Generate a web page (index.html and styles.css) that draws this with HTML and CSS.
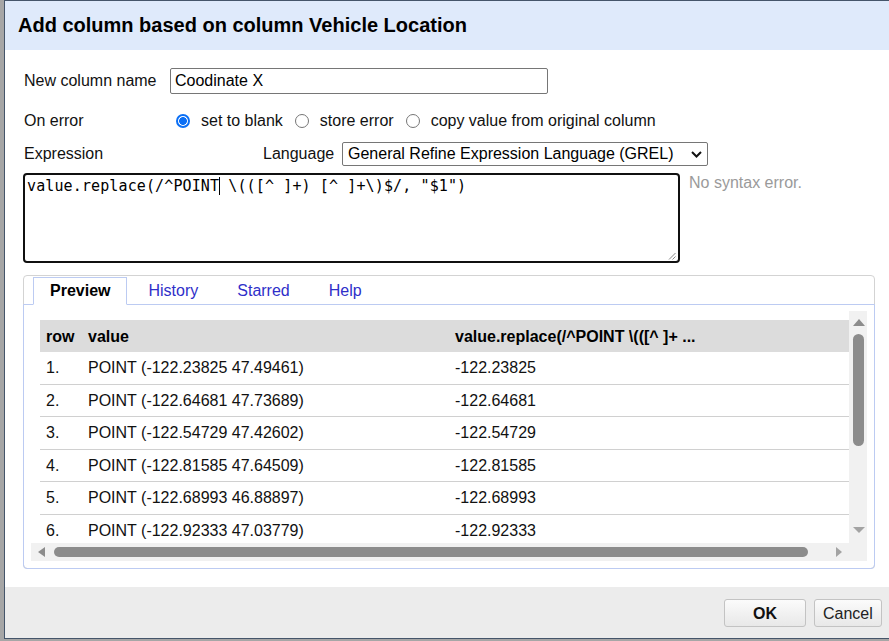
FILE: index.html
```html
<!DOCTYPE html>
<html>
<head>
<meta charset="utf-8">
<link rel="stylesheet" href="styles.css">
</head>
<body>
<div class="dialog">
  <div class="dlg-header">Add column based on column Vehicle Location</div>
  <div class="dlg-body">
    <div class="row row-name">
      <div class="lbl lbl-name">New column name</div>
      <div class="text-input">Coodinate X</div>
    </div>
    <div class="row row-error">
      <div class="lbl lbl-name">On error</div>
      <div class="radios">
        <div class="opt"><span class="radio checked"></span><span>set to blank</span></div>
        <div class="opt"><span class="radio"></span><span>store error</span></div>
        <div class="opt"><span class="radio"></span><span>copy value from original column</span></div>
      </div>
    </div>
    <div class="row row-expr">
      <div class="lbl lbl-expr">Expression</div>
      <div class="lbl lbl-lang">Language</div>
      <div class="select">
        <span>General Refine Expression Language (GREL)</span>
        <svg class="chev" width="11" height="7" viewBox="0 0 11 7"><polyline points="1,1 5.5,5.5 10,1" fill="none" stroke="#111" stroke-width="2"/></svg>
      </div>
    </div>
    <div class="row row-code">
      <div class="textarea">
        <div class="code">value.replace(/^POINT<span class="caret"></span> \(([^ ]+) [^ ]+\)$/, "$1")</div>
        <svg class="grip" width="8" height="8" viewBox="0 0 8 8"><line x1="1" y1="7.5" x2="7.5" y2="1" stroke="#888" stroke-width="1"/><line x1="4.5" y1="7.5" x2="7.5" y2="4.5" stroke="#888" stroke-width="1"/></svg>
      </div>
      <div class="status">No syntax error.</div>
    </div>
    <div class="tabs">
      <div class="tab-nav">
        <div class="tab active">Preview</div>
        <div class="tab">History</div>
        <div class="tab">Starred</div>
        <div class="tab">Help</div>
      </div>
      <div class="tab-panel">
        <div class="scroller">
          <div class="viewport">
            <div class="grid-table">
              <div class="trow thead"><div>row</div><div>value</div><div>value.replace(/^POINT \(([^ ]+ ...</div></div>
              <div class="trow"><div>1.</div><div>POINT (-122.23825 47.49461)</div><div>-122.23825</div></div>
              <div class="trow"><div>2.</div><div>POINT (-122.64681 47.73689)</div><div>-122.64681</div></div>
              <div class="trow"><div>3.</div><div>POINT (-122.54729 47.42602)</div><div>-122.54729</div></div>
              <div class="trow"><div>4.</div><div>POINT (-122.81585 47.64509)</div><div>-122.81585</div></div>
              <div class="trow"><div>5.</div><div>POINT (-122.68993 46.88897)</div><div>-122.68993</div></div>
              <div class="trow"><div>6.</div><div>POINT (-122.92333 47.03779)</div><div>-122.92333</div></div>
            </div>
          </div>
          <div class="vbar">
            <span class="arr-up"></span>
            <span class="vthumb"></span>
            <span class="spacer"></span>
            <span class="arr-down"></span>
          </div>
          <div class="hbar">
            <span class="arr-left"></span>
            <span class="hthumb"></span>
            <span class="spacer"></span>
            <span class="arr-right"></span>
          </div>
          <div class="corner"></div>
        </div>
      </div>
    </div>
  </div>
  <div class="dlg-footer">
    <div class="btn btn-ok">OK</div>
    <div class="btn">Cancel</div>
  </div>
</div>
</body>
</html>
```
FILE: styles.css
```css
* { box-sizing: border-box; }
html, body { margin: 0; padding: 0; height: 100%; }
body {
  background: #a6a6a6;
  font-family: "Liberation Sans", Arial, sans-serif;
  font-size: 16px;
  color: #111;
  overflow: hidden;
}
.dialog {
  margin-left: 4px;
  width: 900px;
  height: 639px;
  background: #fff;
  border: 1px solid #45556a;
  border-right: none;
  display: flex;
  flex-direction: column;
}
.dlg-header {
  height: 49px;
  line-height: 49px;
  background: #dfeafb;
  font-weight: bold;
  font-size: 20px;
  padding-left: 13px;
  color: #000;
}
.dlg-body {
  padding: 18px 0 18px 18px;
  width: 870px;
}
.row { display: flex; align-items: center; }
.lbl { padding-left: 1px; }
.lbl-name { width: 147px; }
.row-name { height: 26px; }
.text-input {
  width: 378px;
  height: 26px;
  border: 1px solid #767676;
  border-radius: 2px;
  padding-left: 4px;
  line-height: 24px;
  color: #000;
}
.row-error { height: 28px; margin-top: 12px; padding-top: 1px; }
.radios { display: flex; align-items: center; padding-left: 6px; gap: 12px; }
.opt { display: flex; align-items: center; }
.radio {
  width: 14px; height: 14px;
  border-radius: 50%;
  border: 1px solid #767676;
  margin-right: 11px;
  background: #fff;
}
.radio.checked {
  border: 2px solid #0b6ff5;
  background: radial-gradient(circle, #0b6ff5 0 3.6px, #fff 4.2px);
}
.row-expr { height: 24px; margin-top: 8px; }
.lbl-expr { width: 239px; }
.lbl-lang { width: 80px; }
.select {
  width: 366px;
  height: 24px;
  border: 1px solid #767676;
  border-radius: 2px;
  display: flex;
  align-items: center;
  justify-content: space-between;
  padding: 0 5px 0 5px;
  color: #000;
}
.chev { margin-top: 1px; }
.row-code { align-items: flex-start; margin-top: 7px; }
.textarea {
  width: 657px;
  height: 90px;
  border: 2px solid #101010;
  border-radius: 4px;
  padding: 2px;
  display: flex;
  flex-direction: column;
  justify-content: space-between;
}
.code {
  font-family: "DejaVu Sans Mono", "Liberation Mono", monospace;
  font-size: 15px;
  line-height: 18px;
  color: #000;
  white-space: pre;
  letter-spacing: 0.12px;
}
.caret {
  display: inline-block;
  width: 1px;
  height: 18px;
  margin-right: -1px;
  background: #000;
  vertical-align: top;
}
.grip { align-self: flex-end; margin: 0 0 -1px 0; }
.status {
  margin-left: 9px;
  color: #9a9a9a;
  line-height: 18px;
  margin-top: 1px;
}
.tabs {
  margin-top: 12px;
  width: 852px;
  height: 294px;
  border: 1px solid #d3d3d3;
  border-radius: 4px;
  display: flex;
  flex-direction: column;
}
.tab-nav {
  display: flex;
  padding: 1px 0 0 9px;
  gap: 3px;
}
.tab {
  height: 28px;
  line-height: 27px;
  padding: 0 18px;
  color: #2f2fc9;
  margin-bottom: -1px;
}
.tab.active {
  color: #000;
  font-weight: bold;
  padding: 0 16px;
  line-height: 26px;
  border: 1px solid #bccbf2;
  border-bottom-color: #fff;
  background: #fff;
  position: relative;
  z-index: 1;
}
.tab-panel {
  flex: 1;
  margin: 0 -1px -1px -1px;
  border: 1px solid #bccbf2;
  border-radius: 0 0 4px 4px;
  padding: 6px 7px 7px 7px;
}
.scroller {
  height: 250px;
  display: grid;
  grid-template-columns: 1fr 18px;
  grid-template-rows: 1fr 18px;
}
.viewport {
  overflow: hidden;
  padding: 9px 0 0 9px;
}
.grid-table { width: 840px; }
.trow {
  display: grid;
  grid-template-columns: 42px 367px 1fr;
  height: 32.5px;
  align-items: center;
  border-bottom: 1px solid #d0d0d0;
  color: #111;
  padding-top: 1px;
}
.trow > div { padding-left: 6px; white-space: nowrap; }
.thead {
  height: 32px;
  background: #dcdcdc;
  font-weight: bold;
  border-bottom: none;
  color: #000;
}
.vbar, .hbar, .corner { background: #f1f1f1; }
.vbar {
  display: flex;
  flex-direction: column;
  align-items: center;
  padding: 8px 0 10px 1px;
}
.arr-up {
  width: 0; height: 0;
  border-left: 6px solid transparent;
  border-right: 6px solid transparent;
  border-bottom: 7px solid #8c8c8c;
}
.arr-down {
  width: 0; height: 0;
  border-left: 6px solid transparent;
  border-right: 6px solid transparent;
  border-top: 6px solid #a3a3a3;
}
.vthumb {
  margin-top: 8px;
  width: 11px;
  height: 112px;
  border-radius: 6px;
  background: #8c8c8c;
}
.spacer { flex: 1; }
.hbar {
  display: flex;
  align-items: center;
  padding: 0 7px;
}
.arr-left {
  width: 0; height: 0;
  border-top: 5px solid transparent;
  border-bottom: 5px solid transparent;
  border-right: 7px solid #8c8c8c;
}
.hthumb {
  margin-left: 9px;
  width: 754px;
  height: 10px;
  border-radius: 5px;
  background: #8c8c8c;
}
.arr-right {
  width: 0; height: 0;
  border-top: 5px solid transparent;
  border-bottom: 5px solid transparent;
  border-left: 6px solid #a3a3a3;
}
.dlg-footer {
  flex: 1;
  background: #ececec;
  display: flex;
  justify-content: flex-start;
  align-items: flex-start;
  padding: 12px 0 0 719px;
  gap: 8px;
}
.btn {
  height: 28px;
  line-height: 27px;
  padding: 0 8px;
  border: 1px solid #c3c3c3;
  border-radius: 3px;
  background: linear-gradient(#fbfbfb, #e8e8e8);
  color: #222;
}
.btn-ok {
  width: 82px;
  text-align: center;
  font-weight: bold;
  color: #111;
}
```
